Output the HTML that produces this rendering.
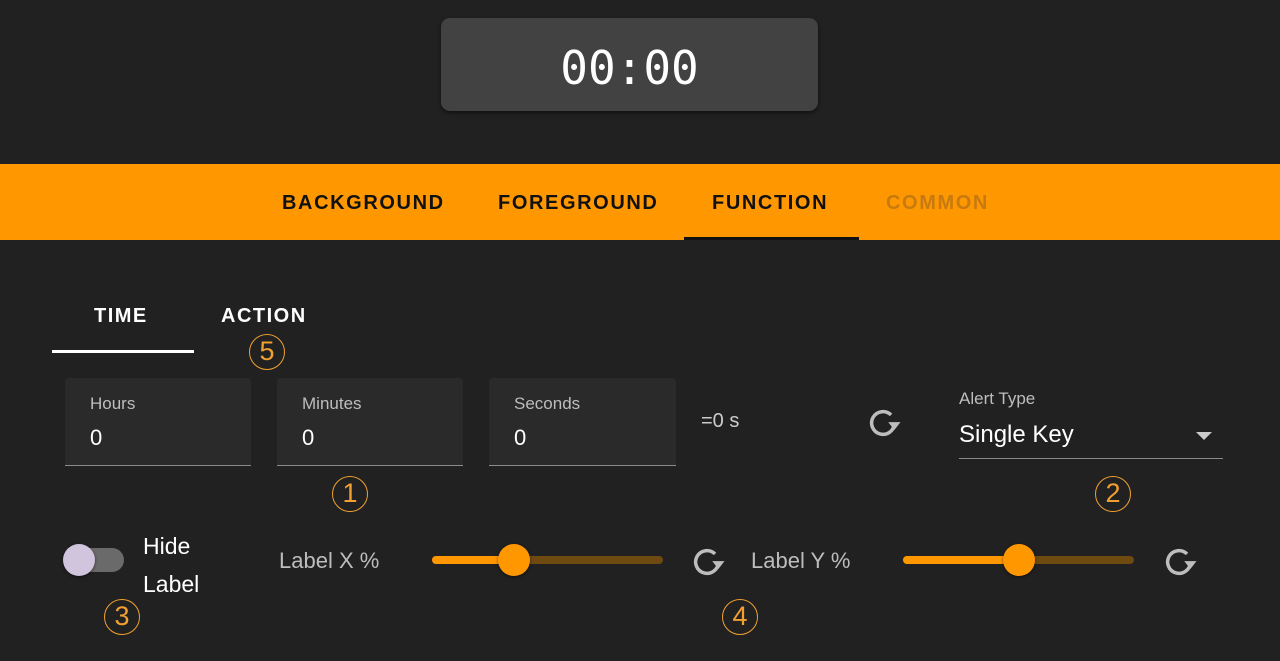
<!DOCTYPE html>
<html><head><meta charset="utf-8"><style>
*{margin:0;padding:0;box-sizing:border-box}
body{width:1280px;height:661px;background:#212121;position:relative;overflow:hidden;font-family:"Liberation Sans",Roboto,sans-serif;color:#fff}
.a{position:absolute}
.timer{left:441px;top:18px;width:377px;height:93px;background:#424242;border-radius:9px;box-shadow:0 2px 4px rgba(0,0,0,.5);text-align:center;line-height:100px;font-family:"DejaVu Sans Mono","Liberation Mono",monospace;font-size:46px;font-weight:normal}
.bar{left:0;top:164px;width:1280px;height:76px;background:#ff9800}
.tab{top:192px;font-size:20px;font-weight:bold;letter-spacing:1.6px;color:#111}
.fld{top:378px;width:186px;height:88px;background:#2a2a2a;border-radius:4px 4px 0 0;border-bottom:1px solid #8a8a8a}
.fld .l{position:absolute;left:25px;top:16px;font-size:17px;color:#bdbdbd}
.fld .v{position:absolute;left:25px;top:47px;font-size:22px;color:#fff}
.num{width:36px;height:36px;border:1.5px solid #f0a030;border-radius:50%;color:#f0a030;font-size:27px;text-align:center;line-height:33px}
.lab{font-size:22px;color:#bdbdbd}
</style></head><body>
<div class="a timer">00:00</div>
<div class="a bar"></div>
<div class="a tab" style="left:282px">BACKGROUND</div>
<div class="a tab" style="left:498px">FOREGROUND</div>
<div class="a tab" style="left:712px">FUNCTION</div>
<div class="a tab" style="left:886px;color:#c77a10">COMMON</div>
<div class="a" style="left:684px;top:237px;width:175px;height:3px;background:#111"></div>

<div class="a" style="left:94px;top:305px;font-size:20px;font-weight:bold;letter-spacing:1.5px">TIME</div>
<div class="a" style="left:221px;top:305px;font-size:20px;font-weight:bold;letter-spacing:1.5px">ACTION</div>
<div class="a" style="left:52px;top:350px;width:142px;height:3px;background:#fff"></div>
<div class="a num" style="left:249px;top:334px">5</div>

<div class="a fld" style="left:65px"><span class="l">Hours</span><span class="v">0</span></div>
<div class="a fld" style="left:277px"><span class="l">Minutes</span><span class="v">0</span></div>
<div class="a fld" style="left:489px;width:187px"><span class="l">Seconds</span><span class="v">0</span></div>
<div class="a" style="left:701px;top:410px;font-size:20px;color:#ccc">=0 s</div>

<svg class="a" style="left:862px;top:402px" width="42" height="42" viewBox="0 0 24 24"><path d="M16.6 7.4A6.5 6.5 0 1 0 18.5 12" fill="none" stroke="#bdbdbd" stroke-width="2"/><path d="M15 11.5h7l-3.5 4.5z" fill="#bdbdbd"/></svg>

<div class="a" style="left:959px;top:389px;font-size:17px;color:#bdbdbd">Alert Type</div>
<div class="a" style="left:959px;top:421px;font-size:24px;color:#fff">Single Key</div>
<div class="a" style="left:1196px;top:432px;width:0;height:0;border-left:8px solid transparent;border-right:8px solid transparent;border-top:8px solid #ccc"></div>
<div class="a" style="left:959px;top:458px;width:264px;height:1px;background:#8a8a8a"></div>

<div class="a num" style="left:332px;top:476px">1</div>
<div class="a num" style="left:1095px;top:476px">2</div>

<div class="a" style="left:64px;top:548px;width:60px;height:24px;border-radius:12px;background:#6a6a6a"></div>
<div class="a" style="left:63px;top:544px;width:32px;height:32px;border-radius:50%;background:#d1c4dd;box-shadow:0 1px 3px rgba(0,0,0,.5)"></div>
<div class="a" style="left:143px;top:527px;font-size:23px;line-height:38px">Hide<br>Label</div>
<div class="a num" style="left:104px;top:599px">3</div>

<div class="a lab" style="left:279px;top:548px">Label X %</div>
<div class="a" style="left:432px;top:556px;width:231px;height:8px;border-radius:4px;background:#6e4a10"></div>
<div class="a" style="left:432px;top:556px;width:82px;height:8px;border-radius:4px;background:#ff9800"></div>
<div class="a" style="left:498px;top:544px;width:32px;height:32px;border-radius:50%;background:#ff9800;box-shadow:0 1px 3px rgba(0,0,0,.5)"></div>
<svg class="a" style="left:686px;top:541px" width="42" height="42" viewBox="0 0 24 24"><path d="M16.6 7.4A6.5 6.5 0 1 0 18.5 12" fill="none" stroke="#bdbdbd" stroke-width="2"/><path d="M15 11.5h7l-3.5 4.5z" fill="#bdbdbd"/></svg>

<div class="a lab" style="left:751px;top:548px">Label Y %</div>
<div class="a" style="left:903px;top:556px;width:231px;height:8px;border-radius:4px;background:#6e4a10"></div>
<div class="a" style="left:903px;top:556px;width:116px;height:8px;border-radius:4px;background:#ff9800"></div>
<div class="a" style="left:1003px;top:544px;width:32px;height:32px;border-radius:50%;background:#ff9800;box-shadow:0 1px 3px rgba(0,0,0,.5)"></div>
<svg class="a" style="left:1158px;top:541px" width="42" height="42" viewBox="0 0 24 24"><path d="M16.6 7.4A6.5 6.5 0 1 0 18.5 12" fill="none" stroke="#bdbdbd" stroke-width="2"/><path d="M15 11.5h7l-3.5 4.5z" fill="#bdbdbd"/></svg>
<div class="a num" style="left:722px;top:599px">4</div>
</body></html>
